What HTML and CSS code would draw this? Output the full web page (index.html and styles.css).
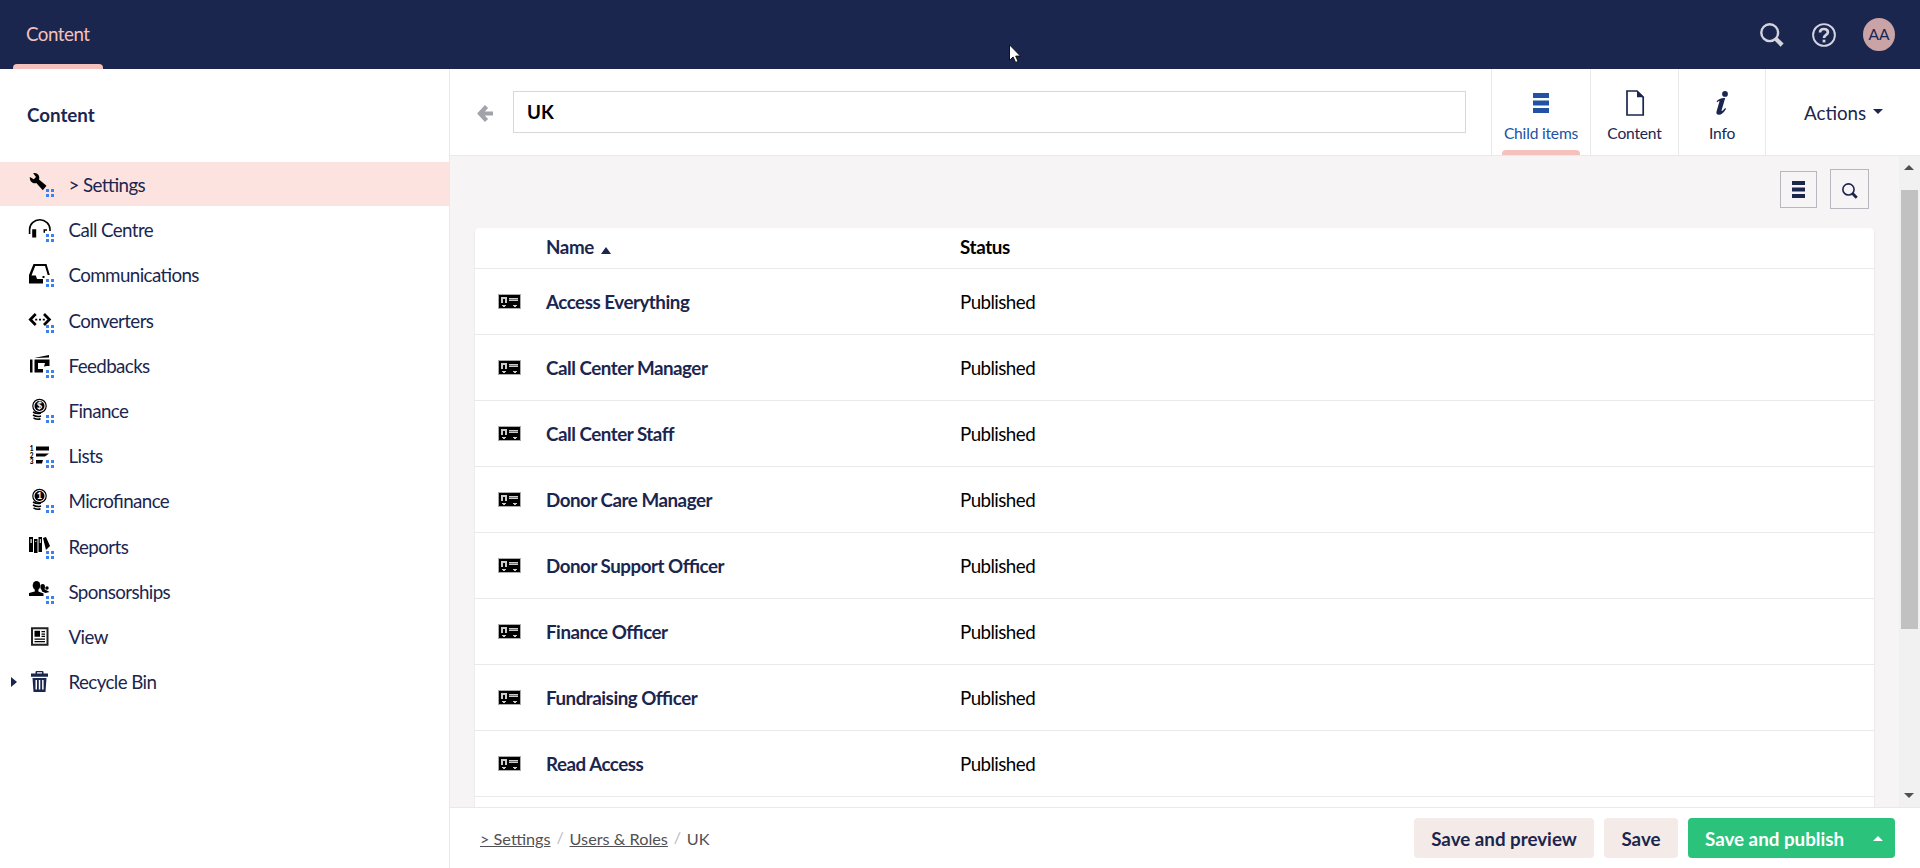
FILE: index.html
```html
<!DOCTYPE html>
<html lang="en">
<head>
<meta charset="utf-8">
<title>UK - Content</title>
<link rel="stylesheet" href="styles.css">
</head>
<body>
<svg class="defs" width="0" height="0">
  <symbol id="dots" viewBox="0 0 8 8"><path fill="#3b82f0" d="M0 0h3v3H0zM5 0h3v3H5zM0 5h3v3H0zM5 5h3v3H5z"/></symbol>
  <symbol id="glass" viewBox="0 0 24 24"><circle cx="9.7" cy="9.7" r="8.4" fill="none" stroke="currentColor" stroke-width="2.4"/><path d="M15.8 15.8l6.3 6.3" stroke="currentColor" stroke-width="4.4"/></symbol>
  <symbol id="card" viewBox="0 0 23 15"><rect width="23" height="15" fill="#aaa"/><rect x="1" y="1" width="21" height="13" fill="#000"/><path fill="#ccc" d="M3 3h6v6H7V5H5v4H3zM11 4h9v1h-9zM11 6h9v1h-9zM4 11h4v1H4zM5 12h2v1H5zM15 11h4v1h-4zM16 12h2v1h-2z"/><path fill="#777" d="M11 5h9v1h-9z"/></symbol>
</svg>
<div class="app">
  <header class="topbar">
    <nav class="sections"><a class="section">Content</a></nav>
    <div class="tools">
      <svg class="tool" viewBox="0 0 24 24"><use href="#glass"/></svg>
      <svg class="tool" viewBox="0 0 24 24" fill="none" stroke="currentColor"><circle cx="12" cy="12" r="10.900" stroke-width="1.900"/><path d="M8 9.400C8 6.800 9.800 6 11.900 6c2.300 0 4 1.100 4 3.200 0 2.800-3.900 2.600-3.900 5.800" stroke-width="2.700"/><path d="M12 16.700v2.700" stroke-width="2.800"/></svg>
      <div class="avatar">AA</div>
    </div>
    <svg class="cursor" viewBox="0 0 13 20"><path d="M.5.800v15.500l3.600-3.300 2.500 5.500 2.500-1.100-2.400-5.300h4.800z" fill="#fff" stroke="#111"/></svg>
  </header>
  <div class="body">
    <aside class="sidebar">
      <h1>Content</h1>
      <ul class="tree">
        <li class="active"><i></i><span class="ico"><svg viewBox="0 0 24 24"><path d="M5.200 1.200C9.500.300 12.300 4 11 7.500l7.500 6.300-3.700 4.400L8.300 11C5 12.300 1.500 9.500 1.800 5l4 2.200L8 5z"/></svg><svg class="dots"><use href="#dots"/></svg></span>&gt; Settings</li>
        <li><i></i><span class="ico"><svg viewBox="0 0 24 24"><path d="M1.600 17v-4.500a10.200 9.700 0 0 1 20.400 0V14" fill="none" stroke="#000" stroke-width="1.600"/><path d="M4.200 12.300h4v8.200h-4zM15.500 12.300h3.500v1.500h-2v2h-1.500z"/></svg><svg class="dots"><use href="#dots"/></svg></span>Call Centre</li>
        <li><i></i><span class="ico"><svg viewBox="0 0 24 24"><path fill-rule="evenodd" d="M5.500 2h13l3.300 11h-2.100L17 4H7.200L3.500 13.500h4.300L9 17h6v4.500H1V13z"/><path d="M14.500 14h2v2h-2z"/></svg><svg class="dots"><use href="#dots"/></svg></span>Communications</li>
        <li><i></i><span class="ico"><svg viewBox="0 0 24 24"><path d="M7.700 6L2.300 11.500l5.400 5.500M16 6l5.400 5.500L16 17" fill="none" stroke="#000" stroke-width="2.700"/><path d="M7.200 10.700h2v1.800h-2zM11 10.700h2v1.800h-2zM14.800 10.700h2v1.800h-2z"/></svg><svg class="dots"><use href="#dots"/></svg></span>Converters</li>
        <li><i></i><span class="ico"><svg viewBox="0 0 24 24"><path d="M2 6.500h2.500v13H2zM6 5l15-3v2.500zM6.500 6.500h15V13h-2.500l-3 .5 1 -3.500H10v6h5v3.500H6.500z"/></svg><svg class="dots"><use href="#dots"/></svg></span>Feedbacks</li>
        <li><i></i><span class="ico"><svg viewBox="0 0 24 24"><circle cx="11.500" cy="8" r="6.700" fill="none" stroke="#000" stroke-width="1.200"/><circle cx="11.500" cy="8" r="5"/><text x="11.500" y="11.300" class="coin">$</text><path d="M5 14q4 2.500 8 1M5 17q4 2.500 8 1M5.500 20q4 2 7 .8" fill="none" stroke="#000" stroke-width="1.500"/></svg><svg class="dots"><use href="#dots"/></svg></span>Finance</li>
        <li><i></i><span class="ico"><svg viewBox="0 -1 24 24"><path d="M8 2.500h13v4H8zM8 9.500h13l-4 3H8zM8 16h7l-1 3.500H8z"/><text x="1.700" y="7" class="num">1</text><text x="1.700" y="13.500" class="num">2</text><text x="1.700" y="19.500" class="num">3</text></svg><svg class="dots"><use href="#dots"/></svg></span>Lists</li>
        <li><i></i><span class="ico"><svg viewBox="0 0 24 24"><circle cx="11.500" cy="8" r="6.700" fill="none" stroke="#000" stroke-width="1.200"/><circle cx="11.500" cy="8" r="5"/><text x="11.500" y="11.300" class="coin">1</text><path d="M5 14q4 2.500 8 1M5 17q4 2.500 8 1M5.500 20q4 2 7 .8" fill="none" stroke="#000" stroke-width="1.500"/></svg><svg class="dots"><use href="#dots"/></svg></span>Microfinance</li>
        <li><i></i><span class="ico"><svg viewBox="0 0 24 24"><path d="M1 3h4v15H1zM6 5h3.500v14H6zM10.500 3h3.500v15h-3.500zM15 4l3-1 4 9-2 2-2 2z"/><path fill="#fff" d="M2.500 5h1.200v4H2.500zM7.300 7h1v1h-1zM11.800 5h1v4h-1z"/></svg><svg class="dots"><use href="#dots"/></svg></span>Reports</li>
        <li><i></i><span class="ico"><svg viewBox="0 0 24 24"><ellipse cx="8.500" cy="6.500" rx="3.800" ry="4.500"/><ellipse cx="14.700" cy="8" rx="2.300" ry="3"/><circle cx="19" cy="9" r="1.700"/><path d="M6.800 10h3.600v2.500l5.100 2V17H1v-3l5.800-1.500zM13.500 10h2.700l5.300 3-4 1-3.500-1.500z"/></svg><svg class="dots"><use href="#dots"/></svg></span>Sponsorships</li>
        <li><i></i><span class="ico"><svg viewBox="0 -.7 24 24"><path d="M4 3.500h15.500v16.500H4z" fill="none" stroke="#222" stroke-width="2"/><path d="M6.500 6h5.500v6H6.500zM13.500 6.300H17v1.300h-3.500zM13.500 8.800H17v1.300h-3.500zM13.500 11H17v1.200h-3.500zM6.500 13.700H17V15H6.500zM6.500 16.300H17v1.200H6.500z"/></svg></span>View</li>
        <li><i><svg viewBox="0 0 6 10"><path d="M0 0l6 5-6 5z" fill="#1b264f"/></svg></i><span class="ico"><svg viewBox="0 -1 24 24" fill="#1b264f"><path fill-rule="evenodd" d="M7.500 3.500V2q0-1 1-1h6q1 0 1 1v1.500H20v3.200H3V3.500zM9 3.500h5V2.300H9zM4.500 8h14l-1 14h-12zM7.500 10v9.500H9V10zm3.300 0v9.500h1.500V10zm3.300 0v9.500h1.500V10z"/></svg></span>Recycle Bin</li>
      </ul>
    </aside>
    <main class="editor">
      <header class="editor-head">
        <svg class="back" viewBox="0 0 16 17"><path d="M9.500 1.500L3 8.500l6.500 7M3 8.500h13" fill="none" stroke="#a2a2a9" stroke-width="4.200"/></svg>
        <div class="name-field">UK</div>
        <nav class="apps">
          <a class="app-tab current"><svg viewBox="0 0 26 26"><path d="M5 3h16v5H5zM5 10.500h16v5H5zM5 18h16v5H5z" fill="currentColor"/></svg><span>Child items</span></a>
          <a class="app-tab document"><svg viewBox="0 0 26 26"><path d="M5 1h10l6.200 6.200V25H5z" fill="none" stroke="currentColor" stroke-width="1.700"/><path d="M15 .5l6.800 6.800H15z" fill="currentColor"/></svg><span>Content</span></a>
          <a class="app-tab info"><svg viewBox="0 0 26 26" fill="currentColor"><circle cx="16" cy="3.900" r="2.900"/><path d="M7.500 11.500c2-2.700 4.500-3.800 8.700-3.600l-3.600 12.300c-.4 1.500 1.200.8 3.500-2.200l1 .7c-2.500 4-4.600 6-7.200 6-2.200 0-3-1.300-2.300-3.500l2.800-9.500c.3-1.200-.8-.7-2 .6z"/></svg><span>Info</span></a>
        </nav>
        <div class="actions">Actions<b class="caret down"></b></div>
      </header>
      <div class="scroll-area">
        <div class="content">
          <div class="toolbar">
            <button class="tb list"><svg viewBox="0 0 13 17"><path d="M0 0h13v4H0zM0 6.500h13v4H0zM0 13h13v4H0z" fill="currentColor"/></svg></button>
            <button class="tb search"><svg viewBox="0 0 24 24"><use href="#glass"/></svg></button>
          </div>
          <div class="table">
            <div class="row head"><span></span><span class="th">Name <b class="sort"></b></span><span class="status">Status</span></div>
            <div class="row"><svg class="card"><use href="#card"/></svg><span class="name">Access Everything</span><span>Published</span></div>
            <div class="row"><svg class="card"><use href="#card"/></svg><span class="name">Call Center Manager</span><span>Published</span></div>
            <div class="row"><svg class="card"><use href="#card"/></svg><span class="name">Call Center Staff</span><span>Published</span></div>
            <div class="row"><svg class="card"><use href="#card"/></svg><span class="name">Donor Care Manager</span><span>Published</span></div>
            <div class="row"><svg class="card"><use href="#card"/></svg><span class="name">Donor Support Officer</span><span>Published</span></div>
            <div class="row"><svg class="card"><use href="#card"/></svg><span class="name">Finance Officer</span><span>Published</span></div>
            <div class="row"><svg class="card"><use href="#card"/></svg><span class="name">Fundraising Officer</span><span>Published</span></div>
            <div class="row"><svg class="card"><use href="#card"/></svg><span class="name">Read Access</span><span>Published</span></div>
            <div class="row"></div>
          </div>
        </div>
        <div class="scrollbar"><b class="arrow up"></b><div class="thumb"></div><b class="arrow dn"></b></div>
      </div>
      <footer class="foot">
        <div class="crumbs"><a>&gt; Settings</a><i>/</i><a>Users &amp; Roles</a><i>/</i><span>UK</span></div>
        <div class="buttons">
          <button class="btn preview">Save and preview</button>
          <button class="btn save">Save</button>
          <button class="btn publish"><span>Save and publish</span><b class="caret upw"></b></button>
        </div>
      </footer>
    </main>
  </div>
</div>
</body>
</html>
```
FILE: styles.css
```css
* { box-sizing: border-box; }
body { margin: 0; font-family: Lato, sans-serif; font-size: 18.75px; color: #1b264f; background: #fff; font-feature-settings: "liga" 1; }
button { font: inherit; color: inherit; padding: 0; border: 0; }
i { font-style: normal; }
.defs { position: absolute; }
.app { display: flex; flex-direction: column; width: 1920px; height: 868px; overflow: hidden; }

.topbar { position: relative; flex: none; height: 69px; background: #1b264f; display: flex; justify-content: space-between; padding: 0 25px 0 13px; }
.sections { display: flex; }
.section { position: relative; width: 90px; padding-left: 13px; line-height: 68px; letter-spacing: -.5px; color: #f5c1bc; }
.section::after { content: ""; position: absolute; left: 0; bottom: 0; width: 90px; height: 5px; background: #f5c1bc; border-radius: 4px 4px 0 0; }
.tools { display: flex; align-items: center; color: #d3d4dd; }
.tool { width: 24px; height: 24px; margin-right: 28px; }
.tool + .tool { margin-right: 27px; }
.avatar { width: 32px; height: 33px; border-radius: 50%; background: #c9a3a6; color: #1b264f; font-size: 15.5px; line-height: 33px; text-align: center; }
.cursor { position: absolute; left: 1009px; top: 44px; width: 13px; height: 20px; }

.body { flex: 1; display: flex; min-height: 0; }
.sidebar { width: 450px; flex: none; border-right: 1px solid #e9e9eb; }
.sidebar h1 { margin: 0; height: 93px; padding-left: 27px; font-size: 18.75px; font-weight: 700; line-height: 92px; }
.tree { list-style: none; margin: 0; padding: 0; display: flex; flex-direction: column; gap: 1.2px; letter-spacing: -.6px; }
.tree li { height: 44px; padding-top: 2px; display: flex; align-items: center; line-height: 42px; }
.tree li.active { background: #fde3e0; }
.tree i { width: 28px; padding-left: 11px; display: flex; }
.tree i svg { width: 6px; height: 10px; }
.ico { position: relative; width: 40.500px; height: 24px; margin-top: -2px; letter-spacing: 0; }
.ico > svg { display: block; width: 24px; height: 24px; }
.ico > .dots { position: absolute; left: 18px; top: 17px; width: 8px; height: 8px; }
.coin { font-size: 9.500px; font-weight: 700; fill: #fff; text-anchor: middle; }
.num { font-size: 6.500px; font-weight: 900; fill: #000; }

.editor { flex: 1; display: flex; flex-direction: column; min-width: 0; }
.editor-head { flex: none; height: 87px; border-bottom: 1px solid #e9e9eb; display: flex; align-items: center; padding-left: 27px; }
.back { width: 16px; height: 17px; margin: 3px 20px 0 0; }
.name-field { width: 953px; height: 42px; border: 1px solid #d8d7d9; padding-left: 13px; font-weight: 700; line-height: 39px; color: #000; }
.apps { display: flex; align-self: stretch; margin-left: 25px; }
.app-tab { position: relative; width: 99px; border-left: 1px solid #e9e9eb; display: flex; flex-direction: column; align-items: center; padding-top: 21px; font-size: 15.6px; letter-spacing: -.2px; }
.app-tab.document { width: 88px; }
.app-tab.info { width: 87px; }
.app-tab svg { width: 26px; height: 26px; }
.app-tab span { line-height: 20px; margin-top: 7px; }
.app-tab.current { color: #2152a3; }
.app-tab.current::after { content: ""; position: absolute; left: 10px; bottom: 0; width: 78px; height: 5px; background: #f5c1bc; border-radius: 4px 4px 0 0; }
.actions { flex: 1; align-self: stretch; border-left: 1px solid #e9e9eb; padding-left: 38px; display: flex; align-items: center; gap: 7px; }
.caret { width: 0; height: 0; border: 5px solid transparent; }
.caret.down { border-top-color: #1b264f; border-bottom: 0; margin-top: -2px; }
.caret.upw { border-bottom-color: #fff; border-top: 0; }

.scroll-area { flex: 1; display: flex; min-height: 0; background: #f6f4f5; }
.content { flex: 1; padding: 0 25px; overflow: hidden; }
.toolbar { height: 72px; padding: 0 5px 6px 0; display: flex; justify-content: flex-end; align-items: center; gap: 13px; }
.tb { border: 1px solid #b9b7bd; background: #f6f4f5; display: flex; align-items: center; justify-content: center; }
.tb.list { width: 37px; height: 37px; }
.tb.list svg { width: 13px; height: 17px; }
.tb.search { width: 39px; height: 40px; }
.tb.search svg { width: 16px; height: 16px; margin-top: 3px; }
.table { background: #fff; border-radius: 4px 4px 0 0; box-shadow: 0 1px 2px rgba(0,0,0,.12); color: #000; }
.row { height: 66px; border-bottom: 1px solid #e9e9eb; display: grid; grid-template-columns: 48px 414px 1fr; padding-left: 23px; align-items: center; letter-spacing: -.55px; }
.row.head { height: 41px; font-weight: 700; letter-spacing: -.35px; }
.row.head span { padding-bottom: 3px; }
.card { width: 23px; height: 15px; }
.th, .name { color: #1b264f; font-weight: 700; }
.name { letter-spacing: -.47px; padding-bottom: 1px; }
.sort { display: inline-block; border: 5.500px solid transparent; border-top: 0; border-bottom: 7px solid #1b264f; margin-left: 3px; }
.scrollbar { width: 21px; background: #f1f1f1; display: flex; flex-direction: column; align-items: center; padding: 9px 1px 9px 0; }
.arrow { border: 5px solid transparent; }
.arrow.up { border-top: 0; border-bottom-color: #505050; }
.arrow.dn { border-bottom: 0; border-top-color: #505050; margin-top: auto; }
.thumb { width: 17px; height: 439px; margin-top: 20px; background: #c1c1c1; }

.foot { flex: none; height: 61px; border-top: 1px solid #e9e9eb; display: flex; align-items: center; justify-content: space-between; padding: 0 25px 0 30px; }
.crumbs { display: flex; align-items: center; font-size: 16.250px; color: #515054; }
.crumbs a { text-decoration: underline; }
.crumbs i { color: #bbbabf; width: 19px; text-align: center; margin-top: -3px; }
.buttons { display: flex; gap: 10px; }
.btn { height: 40px; border-radius: 4px; background: #f4ebe8; font-weight: 700; display: flex; align-items: center; justify-content: center; }
.btn.preview { width: 180px; }
.btn.save { width: 74px; }
.btn.publish { width: 207px; background: #2bc37c; color: #fff; justify-content: space-between; padding: 0 12px 0 17px; }
```
